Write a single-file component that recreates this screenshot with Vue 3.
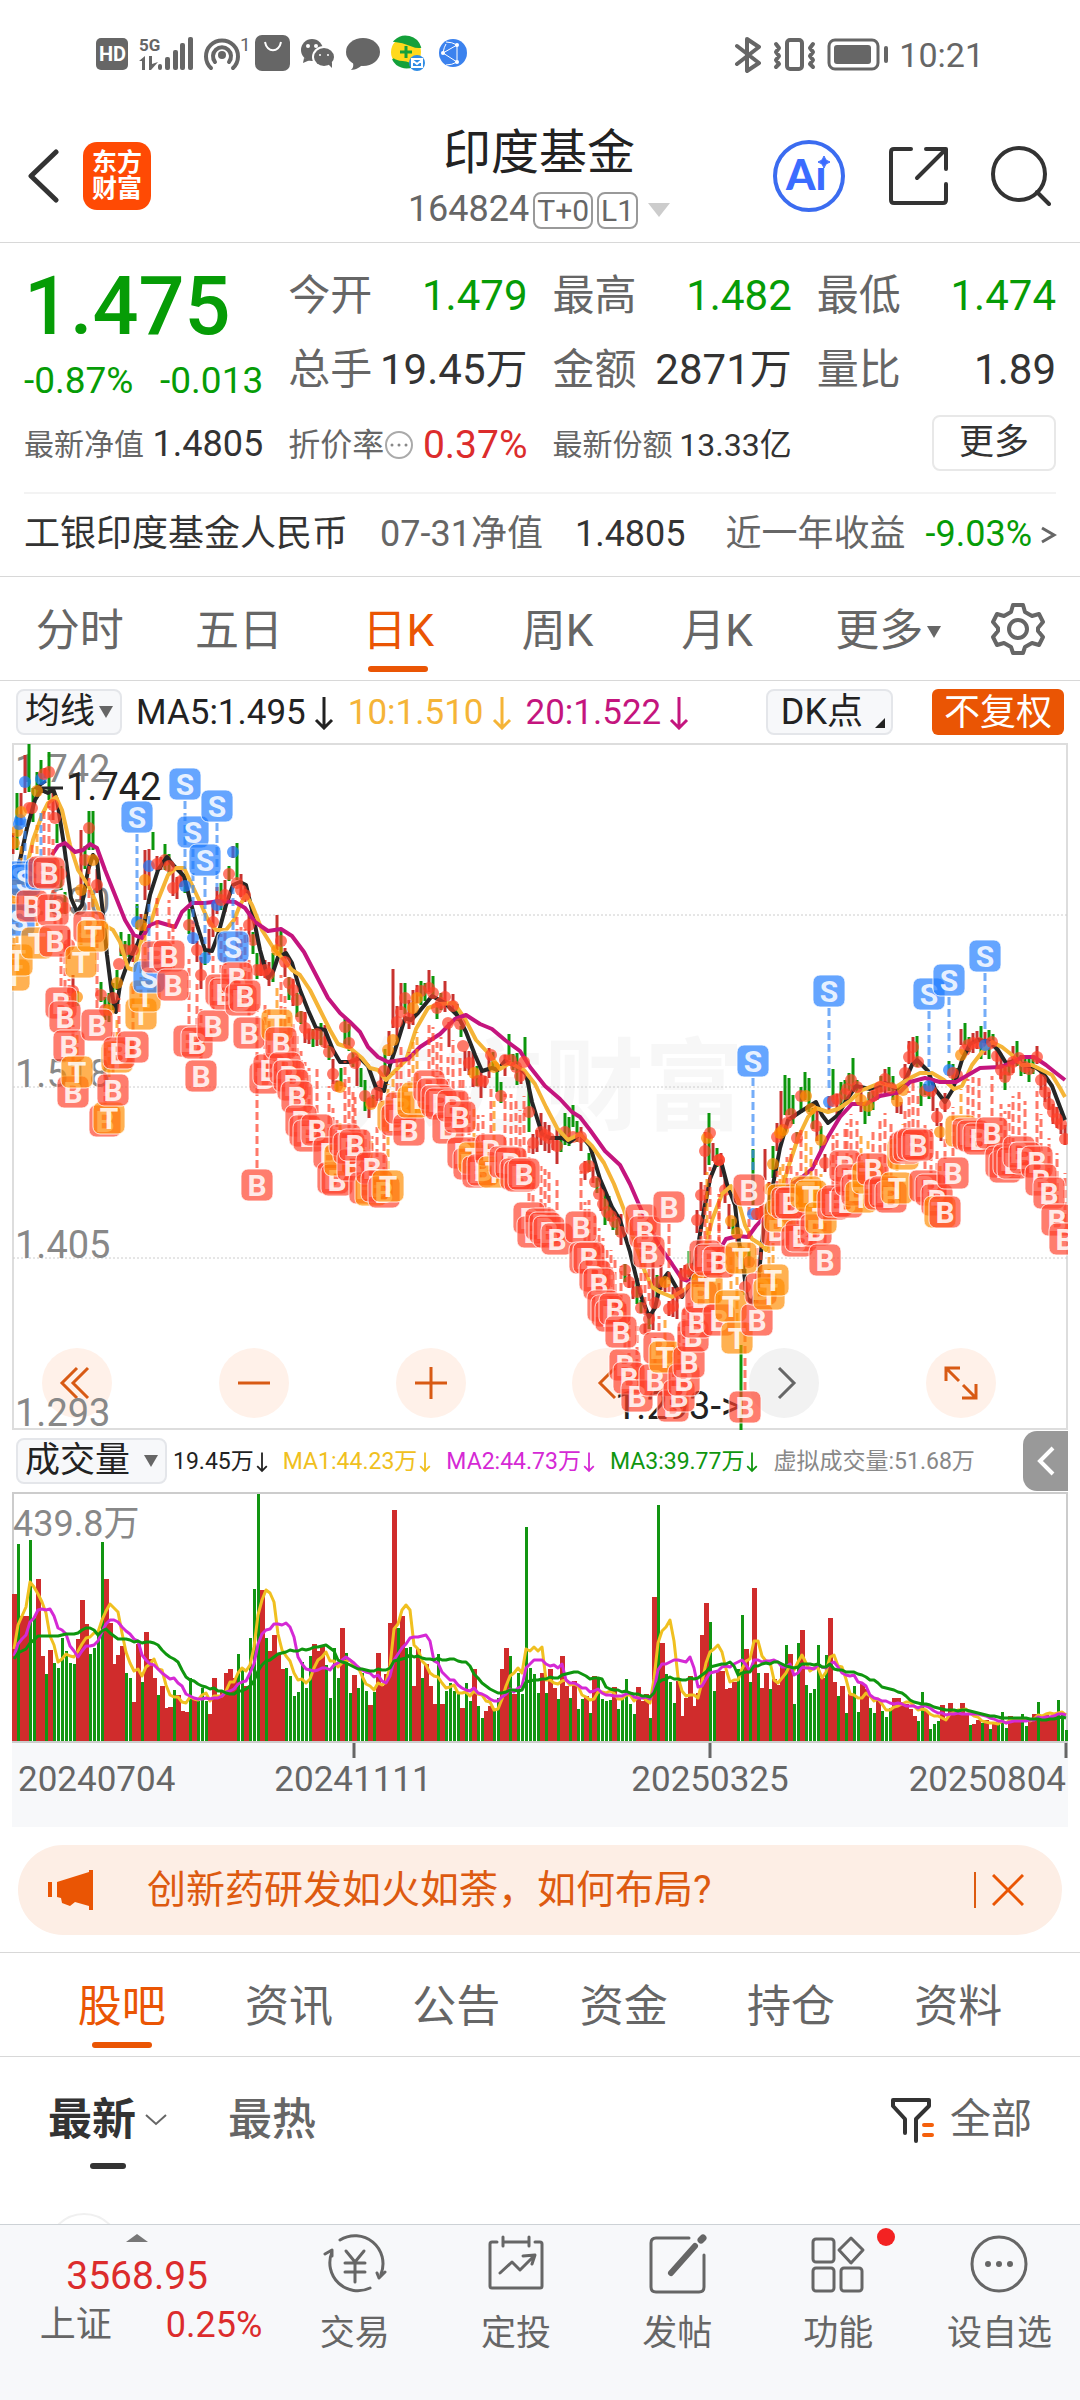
<script setup>
import { ref } from 'vue'

const periods = ['分时', '五日', '日K', '周K', '月K']
const period = ref('日K')
const sections = ['股吧', '资讯', '公告', '资金', '持仓', '资料']
const section = ref('股吧')

// Daily closes as [x, y] plot keys, interpolated for every trading day
const closeKeys = [
  [12, 850], [20, 820], [25, 782], [30, 815], [33, 805], [40, 780], [45, 773], [49, 772], [53, 805], [57, 830], [62, 885], [68, 930], [72, 990], [77, 997], [81, 890], [85, 860], [89, 828], [93, 860], [97, 885], [101, 995], [105, 1010], [109, 1010], [113, 998], [117, 983], [121, 945], [125, 950], [133, 950], [137, 922], [141, 925], [145, 880], [149, 866], [153, 870], [157, 864], [165, 860], [169, 866], [173, 888], [180, 880], [185, 886], [189, 925], [193, 938], [197, 950], [201, 975], [205, 958], [213, 922], [217, 905], [225, 895], [233, 852], [237, 883], [241, 890], [245, 895], [249, 925], [253, 940], [257, 970], [265, 970], [270, 975], [277, 950], [281, 941], [285, 962], [289, 983], [293, 990], [297, 1000], [303, 1025], [313, 1040], [320, 1030], [329, 1052], [335, 1085], [340, 1087], [345, 1027], [352, 1055], [358, 1070], [365, 1096], [370, 1106], [381, 1086], [389, 1045], [393, 1040], [397, 1022], [401, 1012], [405, 998], [409, 1018], [420, 991], [429, 988], [433, 993], [437, 1008], [445, 997], [449, 1032], [453, 1006], [460, 1024], [465, 1060], [471, 1065], [477, 1081], [485, 1081], [491, 1055], [497, 1078], [501, 1096], [505, 1060], [513, 1060], [521, 1078], [525, 1057], [529, 1112], [533, 1143], [541, 1132], [549, 1138], [557, 1146], [565, 1132], [573, 1137], [581, 1137], [585, 1168], [589, 1166], [597, 1187], [601, 1200], [607, 1212], [613, 1218], [621, 1232], [625, 1270], [629, 1282], [637, 1292], [641, 1308], [645, 1329], [655, 1303], [661, 1272], [665, 1282], [669, 1309], [677, 1303], [681, 1282], [687, 1267], [693, 1272], [697, 1220], [701, 1195], [705, 1151], [709, 1125], [713, 1155], [721, 1162], [727, 1204], [733, 1230], [739, 1235], [745, 1287], [749, 1262], [753, 1214], [760, 1214], [765, 1210], [770, 1184], [777, 1137], [785, 1127], [793, 1110], [797, 1138], [801, 1096], [809, 1096], [813, 1122], [817, 1127], [821, 1140], [825, 1163], [829, 1102], [837, 1099], [845, 1094], [853, 1075], [865, 1112], [873, 1096], [881, 1086], [887, 1075], [893, 1094], [901, 1107], [905, 1073], [909, 1057], [913, 1047], [917, 1050], [921, 1096], [929, 1086], [933, 1096], [941, 1137], [949, 1070], [957, 1075], [961, 1055], [969, 1044], [977, 1042], [985, 1045], [993, 1042], [1001, 1070], [1005, 1077], [1017, 1055], [1025, 1067], [1033, 1070], [1037, 1057], [1041, 1080], [1049, 1104], [1057, 1119], [1063, 1126], [1067, 1151]
]
const closeAt = (x) => {
  for (let i = 1; i < closeKeys.length; i++) {
    if (x <= closeKeys[i][0]) {
      const [x0, y0] = closeKeys[i - 1]
      const [x1, y1] = closeKeys[i]
      return Math.round(y0 + ((y1 - y0) * (x - x0)) / (x1 - x0))
    }
  }
  return closeKeys[closeKeys.length - 1][1]
}

// Days whose full range is much wider than the usual one: x -> [high, low, rising]
const wide = {
  17: [793, 850, 0], 25: [755, 793, 1], 29: [744, 792, 0], 49: [752, 800, 0], 81: [830, 900, 1], 89: [811, 850, 0], 93: [811, 850, 0],
  145: [850, 900, 1], 149: [849, 890, 1], 153: [832, 850, 0], 237: [843, 880, 0], 277: [915, 950, 1], 345: [1019, 1045, 0],
  393: [969, 1028, 1], 401: [983, 1010, 1], 421: [981, 1005, 0], 509: [1034, 1060, 0], 525: [1037, 1060, 0], 529: [1075, 1132, 0],
  573: [1105, 1127, 0], 653: [1262, 1330, 1], 705: [1132, 1175, 1], 709: [1113, 1165, 0], 741: [1345, 1430, 0], 753: [1149, 1205, 0],
  765: [1149, 1180, 1], 781: [1091, 1140, 1], 785: [1075, 1115, 0], 789: [1078, 1115, 0], 805: [1072, 1100, 0], 833: [1069, 1100, 0],
  965: [1023, 1045, 0], 961: [1029, 1045, 1]
}
let seed = 7
const rand = () => {
  seed = (seed * 1103515245 + 12345) % 2147483648
  return seed / 2147483648
}
const candles = Array.from({ length: 264 }, (_, i) => {
  const x = 13 + i * 4
  if (wide[x]) return { x, top: wide[x][0], bottom: wide[x][1], up: wide[x][2] }
  const y = closeAt(x)
  const a = Math.round(rand() * 14)
  const b = Math.round(rand() * 14)
  const up = rand() > 0.5
  return { x, top: y - 5 - a, bottom: y + 4 + b, up }
})

const ma5 = '14,880 20,860 27,828 35,800 41,790 48,793 53,789 57,800 64,845 71,898 77,912 82,905 88,870 93,855 97,860 102,905 107,955 112,995 116,1012 120,985 128,962 138,943 144,925 150,895 158,870 167,857 174,866 184,876 190,900 197,925 205,950 212,951 218,935 226,905 233,885 240,882 246,885 252,910 260,950 268,978 273,972 278,957 286,953 292,963 300,990 308,1010 316,1028 325,1030 333,1050 340,1062 350,1062 360,1058 368,1066 376,1088 384,1091 390,1065 397,1044 405,1018 411,1020 418,1013 432,996 445,1003 458,1016 466,1032 475,1055 482,1071 492,1068 498,1070 505,1061 520,1068 526,1074 532,1102 542,1134 550,1138 562,1138 570,1142 580,1134 590,1146 600,1179 612,1207 620,1220 630,1252 640,1293 649,1317 655,1308 661,1282 668,1273 676,1287 682,1297 690,1284 698,1246 704,1210 710,1179 716,1164 721,1161 727,1184 735,1205 739,1241 744,1272 747,1298 752,1303 758,1287 761,1252 765,1215 772,1190 780,1148 788,1120 800,1112 816,1102 822,1115 828,1123 838,1115 846,1101 856,1086 870,1089 885,1083 897,1089 905,1081 912,1065 917,1060 928,1071 935,1089 945,1102 953,1089 962,1060 970,1044 978,1040 990,1042 998,1050 1006,1063 1015,1061 1025,1065 1035,1067 1043,1073 1052,1086 1060,1107 1065,1120'
const ma10 = '26,870 33,840 42,815 48,803 56,797 62,810 70,845 78,870 88,885 95,900 104,925 113,930 120,942 128,968 134,970 142,938 150,925 158,900 168,875 176,868 184,868 192,885 200,902 208,920 216,930 226,930 234,920 240,905 246,895 252,905 262,930 274,949 284,960 292,970 300,975 310,990 320,1010 330,1030 338,1044 350,1048 362,1058 370,1068 378,1070 386,1080 396,1070 406,1060 416,1029 428,1008 440,1004 454,1003 465,1019 476,1040 490,1055 500,1069 510,1063 524,1070 535,1084 546,1107 557,1128 568,1140 580,1134 592,1146 604,1163 614,1184 624,1210 636,1246 645,1272 652,1287 660,1292 672,1297 684,1290 692,1284 702,1262 712,1220 722,1194 731,1186 738,1200 745,1225 752,1239 760,1244 766,1250 776,1210 788,1168 798,1138 808,1117 816,1108 828,1112 838,1109 850,1101 860,1091 880,1083 896,1087 910,1078 920,1073 932,1073 944,1080 954,1089 962,1086 972,1065 982,1052 992,1042 1002,1047 1012,1055 1022,1065 1032,1065 1042,1070 1052,1075 1060,1088 1065,1097'
const ma20 = '52,855 58,846 65,843 75,852 83,850 90,844 97,848 105,870 115,895 125,920 134,935 142,938 150,925 158,922 175,927 182,912 192,903 205,903 220,901 235,902 245,908 255,922 268,931 281,929 292,936 304,952 316,975 328,998 340,1013 350,1022 360,1032 368,1047 378,1057 388,1062 408,1059 420,1047 440,1034 455,1019 466,1015 480,1024 492,1029 505,1040 520,1051 530,1067 545,1086 560,1099 572,1112 580,1117 590,1130 605,1151 620,1165 630,1184 640,1207 650,1229 660,1247 672,1264 682,1279 692,1282 704,1282 716,1256 726,1239 738,1236 748,1237 756,1226 768,1213 785,1189 800,1179 812,1169 820,1153 828,1137 840,1117 852,1104 866,1104 880,1096 900,1092 910,1082 925,1078 940,1082 956,1082 968,1075 980,1068 1000,1067 1012,1063 1022,1057 1034,1057 1046,1065 1056,1073 1065,1080'

// Trade signals: type, x, y of the badge
const signals = [
  ['T', 14, 975], ['T', 17, 960], ['S', 20, 877], ['T', 21, 895], ['S', 19, 920], ['S', 25, 880], ['B', 32, 906], ['T', 37, 943], ['S', 41, 874], ['B', 44, 872], ['B', 49, 873], ['B', 53, 910], ['B', 55, 941],
  ['B', 61, 1003], ['B', 65, 1017], ['B', 69, 1046], ['B', 73, 1092], ['T', 77, 1072], ['T', 81, 962], ['B', 89, 927], ['T', 93, 936], ['B', 97, 1025], ['B', 105, 1121], ['T', 109, 1118], ['T', 117, 1057], ['B', 113, 1090], ['B', 119, 1053], ['B', 133, 1047],
  ['S', 137, 817], ['T', 141, 1014], ['T', 145, 996], ['S', 149, 977], ['B', 157, 957], ['B', 169, 956], ['B', 173, 985], ['S', 185, 784], ['S', 193, 832], ['S', 205, 860], ['S', 217, 806], ['B', 189, 1041], ['B', 197, 1043], ['B', 201, 1076],
  ['B', 213, 1026], ['B', 221, 990], ['B', 225, 994], ['S', 233, 947], ['B', 237, 978], ['B', 241, 1000], ['B', 245, 996], ['B', 249, 1033], ['B', 257, 1185], ['B', 265, 1078], ['B', 269, 1070], ['T', 277, 1025], ['B', 281, 1043],
  ['B', 285, 1068], ['B', 289, 1076], ['B', 293, 1085], ['B', 297, 1097], ['B', 301, 1121], ['B', 305, 1131], ['B', 309, 1136], ['B', 317, 1130], ['B', 329, 1153], ['B', 333, 1178], ['B', 337, 1180], ['T', 340, 1160],
  ['B', 345, 1140], ['B', 349, 1148], ['B', 353, 1165], ['B', 355, 1145], ['B', 365, 1188], ['T', 371, 1190], ['B', 372, 1168], ['B', 377, 1186], ['B', 384, 1192], ['T', 388, 1186], ['T', 393, 1116], ['B', 397, 1120], ['B', 401, 1108],
  ['B', 409, 1130], ['T', 413, 1102], ['T', 417, 1098], ['B', 429, 1086], ['B', 433, 1094], ['B', 437, 1101], ['B', 441, 1104], ['B', 448, 1128], ['B', 453, 1106], ['B', 460, 1117], ['B', 463, 1153], ['B', 469, 1164], ['T', 474, 1158],
  ['B', 478, 1172], ['B', 483, 1170], ['B', 491, 1150], ['T', 494, 1172], ['B', 505, 1162], ['B', 511, 1163], ['B', 516, 1174], ['B', 520, 1176], ['B', 524, 1174], ['B', 529, 1218], ['B', 533, 1232], ['B', 541, 1224], ['B', 545, 1228],
  ['B', 549, 1232], ['B', 557, 1239], ['B', 581, 1227], ['B', 585, 1258], ['B', 589, 1258], ['B', 595, 1276], ['B', 599, 1284], ['B', 603, 1306], ['B', 607, 1311], ['B', 611, 1316], ['B', 615, 1309], ['B', 621, 1332],
  ['B', 625, 1365], ['B', 629, 1378], ['B', 637, 1396], ['B', 641, 1220], ['B', 645, 1232], ['B', 649, 1252], ['B', 669, 1207], ['B', 655, 1380], ['B', 659, 1348], ['T', 665, 1357], ['B', 673, 1406], ['B', 679, 1396], ['B', 684, 1380],
  ['B', 689, 1362], ['B', 693, 1336], ['B', 697, 1322], ['B', 701, 1297], ['B', 705, 1256], ['T', 707, 1288], ['B', 710, 1260], ['B', 719, 1320], ['B', 719, 1262], ['T', 731, 1306], ['T', 737, 1338], ['T', 741, 1258], ['B', 745, 1407],
  ['B', 749, 1190], ['S', 753, 1061], ['B', 757, 1320], ['B', 761, 1289], ['T', 769, 1294], ['T', 773, 1280], ['B', 777, 1230], ['T', 780, 1216], ['T', 783, 1200], ['B', 787, 1203], ['B', 791, 1203], ['B', 797, 1241], ['B', 801, 1236],
  ['T', 806, 1192], ['T', 811, 1196], ['B', 816, 1230], ['T', 821, 1218], ['B', 825, 1260], ['S', 829, 991], ['B', 833, 1204], ['B', 837, 1201], ['B', 845, 1166], ['B', 847, 1202], ['B', 851, 1180], ['B', 857, 1190], ['T', 861, 1197], ['T', 868, 1178], ['B', 873, 1169],
  ['B', 880, 1194], ['B', 885, 1192], ['B', 891, 1197], ['T', 897, 1188], ['T', 903, 1154], ['B', 905, 1148], ['B', 909, 1146], ['B', 913, 1144], ['B', 918, 1145], ['B', 925, 1186], ['B', 931, 1190], ['S', 929, 994], ['B', 937, 1200], ['T', 940, 1212], ['B', 945, 1212],
  ['S', 949, 980], ['B', 953, 1173], ['T', 961, 1131], ['B', 968, 1134], ['B', 973, 1136], ['B', 979, 1139], ['S', 985, 956], ['B', 992, 1133], ['B', 1001, 1162], ['B', 1005, 1167], ['B', 1009, 1160], ['B', 1013, 1163], ['B', 1019, 1152],
  ['B', 1025, 1158], ['B', 1037, 1162], ['B', 1041, 1180], ['B', 1049, 1193], ['B', 1057, 1220], ['B', 1065, 1239]
].map(([type, x, y]) => {
  const price = closeAt(x)
  const below = y > price
  return { type, x, y, price, from: below ? price + 34 : price - 14, to: below ? y - 17 : y + 17 }
})
const plainDots = candles
  .filter((c, i) => i % 2 === 0 && !signals.some((s) => Math.abs(s.x - c.x) < 3))
  .map((c) => ({ x: c.x, y: closeAt(c.x) }))

// Daily volume; negative marks a falling day
const volumes = [
  440, -590, 375, 375, -603, -370, 485, 255, -200, 272, -235, -220, -310, -270, -235, -230, 305, 422, 350, -260, -280, -330, -598, 487, 355, 230, 258, 285, -203, -190, 118, 290, -178, 327, 245, 190, -138, 165, 98, 103, -153, 138, 90, 88,
  -190, 128, -120, -158, -120, 80, 190, 130, 150, 203, 216, 190, -262, -218, 165, -308, -457, -740, 452, -308, 270, 318, 260, 215, -218, -195, -135, -148, -238, -160, -255, 290, 270, 285, -228, -130, -280, -190, 340, -265, -145, 197, -158, -205,
  -150, 108, -148, 263, 165, 200, 353, 692, -340, 375, -280, -283, 165, 275, -190, 230, 165, 110, -260, 110, -150, -175, -150, -140, 98, -173, -120, 215, -105, -70, 90, 105, -90, -130, 215, 280, -255, 140, -205, -140, -643, -220, -200, -145,
  205, -145, 215, 160, -125, 255, 165, -130, 180, -95, -125, 135, -85, 195, -190, -125, -120, -122, 163, -95, -130, -185, -110, -80, 162, 120, 140, -70, 432, -708, 293, -200, -178, -115, 180, 75, 130, 195, 105, 145, 317, 413, -357, -150,
  210, 210, 155, 160, 178, -215, -378, 276, -178, 460, -205, 160, 203, -155, 185, 168, 230, -288, 262, -110, -293, 333, -168, -145, -155, -287, 190, -258, 370, 178, -135, 165, -83, 140, -165, -88, 170, 155, -98, -85, 125, -90, -72, -100, 130,
  128, 118, 110, 95, 75, -60, -147, 90, -35, -50, -60, 107, 70, 113, 85, 90, 113, 80, -48, 50, 63, -55, 62, -35, 58, -50, -88, -40, 75, 60, 62, -82, -45, 58, 82, -118, 70, 78, 68, 78, -124, -85, -33
]
const volumeBase = 1741
const bars = volumes.map((v, i) => ({ x: 14 + i * 4, h: Math.round(Math.abs(v) / 3), up: v > 0 }))
const average = (n) =>
  volumes
    .map((_, i) => {
      let sum = 0
      for (let k = i - n + 1; k <= i; k++) sum += k < 0 ? 235 : Math.abs(volumes[k])
      return `${14 + i * 4},${volumeBase - Math.round(sum / n / 3)}`
    })
    .join(' ')
const volumeLines = [
  { color: '#f0c020', points: average(5) },
  { color: '#d529d5', points: average(10) },
  { color: '#0f960f', points: average(20) }
]
</script>

<template>
  <div class="page">
    <header class="top">
      <div class="status">
        <svg class="status-left" viewBox="0 0 376 40" aria-hidden="true">
          <g fill="#666">
            <rect x="0" y="3" width="32" height="32" rx="5" />
            <text x="3" y="26" font-size="20" font-weight="700" fill="#fff">HD</text>
            <text x="43" y="16" font-size="17" font-weight="700">5G</text>
            <path d="M43 26l6-5v14h-3v-9zM53 21h3v8l6-2-7 8h-2z" />
            <rect x="62" y="29" width="4" height="6" rx="2" /><rect x="69" y="22" width="5" height="13" rx="2" /><rect x="77" y="15" width="5" height="20" rx="2" /><rect x="84" y="8" width="5" height="27" rx="2" /><rect x="92" y="2" width="5" height="33" rx="2" />
            <circle cx="126" cy="20" r="4" />
            <g fill="none" stroke="#666" stroke-width="4" stroke-linecap="round"><path d="M115 33a16 16 0 1 1 22 0M119 27a9 9 0 1 1 14 0" /></g>
            <text x="144" y="16" font-size="19">1</text>
            <rect x="159" y="0" width="35" height="36" rx="7" />
            <path d="M169 7c2 11 14 11 16 0" fill="none" stroke="#fff" stroke-width="2" />
            <ellipse cx="216" cy="15" rx="11" ry="11" /><path d="M208 23l-1 5 7-3z" />
            <ellipse cx="228" cy="22" rx="12" ry="11" fill="#fff" /><ellipse cx="228" cy="22" rx="10" ry="9" /><path d="M232 29l4 4v-6z" />
            <g fill="#fff"><circle cx="212" cy="11" r="2" /><circle cx="220" cy="11" r="2" /><circle cx="224" cy="20" r="1" /><circle cx="232" cy="20" r="1" /></g>
            <ellipse cx="267" cy="17" rx="17" ry="14" /><path d="M257 28c1 4-1 6-2 7 5 0 9-3 11-5z" />
            <circle cx="310" cy="17" r="15" fill="#ffd91c" />
            <path d="M299 6a15 15 0 0 1 25 6c-7 1-11-5-25-6zM297 24c6 5 14 1 20 7a15 15 0 0 1-20-7z" fill="#14a03a" stroke="#14a03a" stroke-width="2" />
            <path d="M310 11v12M304 17h12" stroke="#14a03a" stroke-width="3" />
            <circle cx="321" cy="28" r="8" fill="#2f8ce4" /><path d="M316 24h10v8h-10zM316 25l5 4 5-4" fill="none" stroke="#fff" stroke-width="2" />
            <circle cx="357" cy="18" r="14" fill="#3b82ee" />
            <path d="M347 18l14-8M347 18l14 9M361 10v17M350 7q6 0 11 3M350 30q6 0 11-3M347 18q1-6 3-9" fill="none" stroke="#fff" />
            <g fill="#fff"><circle cx="347" cy="18" r="2" /><circle cx="361" cy="10" r="2" /><circle cx="361" cy="27" r="2" /></g>
          </g>
        </svg>
        <div class="status-right">
          <svg viewBox="0 0 154 36" width="154" height="36" fill="none" stroke="#666" stroke-width="4" stroke-linejoin="round" stroke-linecap="round" aria-hidden="true">
            <path d="M3 9l22 17-12 8V2l12 8L3 27" />
            <rect x="53" y="3" width="15" height="29" rx="3" />
            <path d="M42 7l3 4-3 4 3 4-3 4 3 4-3 3M79 7l-3 4 3 4-3 4 3 4-3 4 3 3" />
            <rect x="95" y="3" width="49" height="29" rx="6" stroke-width="3" />
            <rect x="100" y="8" width="37" height="19" rx="3" fill="#666" stroke="none" />
            <path d="M152 11v13" />
          </svg>
          <span>10:21</span>
        </div>
      </div>
      <div class="nav">
        <div class="nav-left">
          <button class="plain" aria-label="返回">
            <svg width="32" height="54" viewBox="0 0 32 54" fill="none" stroke="#333" stroke-width="5" stroke-linecap="round" stroke-linejoin="round"><path d="M29 3L4 27l25 24" /></svg>
          </button>
          <a class="brand" href="#">东方<br />财富</a>
        </div>
        <div class="title">
          <h1>印度基金</h1>
          <div class="code">
            <span>164824</span><span class="tag">T+0</span><span class="tag">L1</span><i class="drop"></i>
          </div>
        </div>
        <div class="nav-right">
          <button class="plain" aria-label="Ai">
            <svg width="72" height="72" viewBox="0 0 72 72">
              <circle cx="36" cy="36" r="34" fill="none" stroke="#3b6cf0" stroke-width="4" />
              <text x="13" y="50" class="ai">Ai</text>
              <circle cx="50" cy="21" r="7" fill="#fff" /><path d="M51 16q1 5 6 6-5 1-6 6-1-5-6-6 5-1 6-6z" fill="#3b6cff" stroke="#3b6cff" />
            </svg>
          </button>
          <button class="plain" aria-label="分享">
            <svg width="60" height="60" viewBox="0 0 60 60" fill="none" stroke="#333" stroke-width="4" stroke-linecap="round" stroke-linejoin="round"><path d="M23 3H6q-3 0-3 3v48q0 3 3 3h49q3 0 3-3V38M38 3h20v20M57 4L29 32" /></svg>
          </button>
          <button class="plain" aria-label="搜索">
            <svg width="60" height="60" viewBox="0 0 60 60" fill="none" stroke="#333" stroke-width="4" stroke-linecap="round"><circle cx="28" cy="28" r="26" /><path d="M46 46l12 12" /></svg>
          </button>
        </div>
      </div>
    </header>

    <section class="quote">
      <div class="grid">
        <div class="price">
          <strong>1.475</strong>
          <div class="change"><span>-0.87%</span><span>-0.013</span></div>
        </div>
        <div class="cell"><span>今开</span><b class="green">1.479</b></div>
        <div class="cell"><span>最高</span><b class="green">1.482</b></div>
        <div class="cell"><span>最低</span><b class="green">1.474</b></div>
        <div class="cell"><span>总手</span><b>19.45万</b></div>
        <div class="cell"><span>金额</span><b>2871万</b></div>
        <div class="cell"><span>量比</span><b>1.89</b></div>
        <div class="cell small"><span>最新净值</span><b class="mid">1.4805</b></div>
        <div class="cell small">
          <span class="rate">折价率<svg width="30" height="30" viewBox="0 0 30 30"><circle cx="15" cy="15" r="13" fill="none" stroke="#aaa" stroke-width="2" /><path d="M8 15h0M15 15h0M22 15h0" stroke="#888" stroke-width="3" stroke-linecap="round" /></svg></span>
          <b class="red">0.37%</b>
        </div>
        <div class="cell small"><span>最新份额</span><b class="share">13.33亿</b></div>
        <div class="cell end"><button class="more">更多</button></div>
      </div>
      <a class="fund" href="#">
        <span class="dark">工银印度基金人民币</span><span>07-31净值</span><span class="dark">1.4805</span>
        <span class="year">近一年收益</span>
        <span class="last">-9.03%<svg width="16" height="24" viewBox="0 0 16 24" fill="none" stroke="#666" stroke-width="3"><path d="M1 5l12 7-12 7" /></svg></span>
      </a>
    </section>

    <nav class="periods">
      <button v-for="p in periods" :key="p" class="tab" :class="{ on: p === period }" @click="period = p">{{ p }}</button>
      <button class="tab more-tab">更多<i class="drop dark-drop"></i></button>
      <button class="plain gear" aria-label="设置">
        <svg width="54" height="54" viewBox="0 0 54 54" fill="none" stroke="#666" stroke-width="4" stroke-linejoin="round"><path d="M22 3h10l2 7 7 4 7-2 4 8-5 6v3l5 6-4 8-7-2-7 4-2 6H22l-2-6-7-4-7 2-4-8 5-6v-3l-5-6 4-8 7 2 7-4z" /><circle cx="27" cy="27" r="9" /></svg>
      </button>
    </nav>

    <div class="averages">
      <button class="chip">均线<i class="drop dark-drop"></i></button>
      <span class="avg c1">MA5:1.495<svg class="down" viewBox="0 0 20 34"><path d="M10 1v31M2 24l8 8 8-8" /></svg></span>
      <span class="avg c2">10:1.510<svg class="down" viewBox="0 0 20 34"><path d="M10 1v31M2 24l8 8 8-8" /></svg></span>
      <span class="avg c3">20:1.522<svg class="down" viewBox="0 0 20 34"><path d="M10 1v31M2 24l8 8 8-8" /></svg></span>
      <button class="chip dk">DK点<i class="corner"></i></button>
      <button class="adjust">不复权</button>
    </div>

    <section class="chart">
      <div class="tools">
        <button aria-label="最早"><svg viewBox="0 0 36 36"><path d="M18 3L3 18l15 15M29 3L14 18l15 15" /></svg></button>
        <button aria-label="缩小"><svg viewBox="0 0 36 36"><path d="M2 18h32" /></svg></button>
        <button aria-label="放大"><svg viewBox="0 0 36 36"><path d="M2 18h32M18 2v32" /></svg></button>
        <button aria-label="向前"><svg viewBox="0 0 36 36"><path d="M26 3L11 18l15 15" /></svg></button>
        <button class="grey" aria-label="向后"><svg viewBox="0 0 36 36"><path d="M13 3l15 15-15 15" /></svg></button>
        <button aria-label="全屏"><svg viewBox="0 0 36 36"><path d="M3 16V3h14M3 3l13 13M20 20l13 13M33 19v14H19" /></svg></button>
      </div>
      <svg class="plot" viewBox="12 743 1056 687">
        <text x="344" y="1122" class="watermark">东方财富</text>
        <rect x="13" y="744" width="1054" height="685" fill="none" stroke="#ddd" stroke-width="2" />
        <path d="M13 915H1067M13 1087H1067M13 1258H1067" stroke="#ccc" stroke-dasharray="2 2" />
        <g class="scale">
          <text x="15" y="782">1.742</text><text x="15" y="915">1.630</text><text x="15" y="1087">1.518</text><text x="15" y="1258">1.405</text><text x="15" y="1426">1.293</text>
        </g>
        <line v-for="c in candles" :key="c.x" :x1="c.x" :x2="c.x" :y1="c.top" :y2="c.bottom" :stroke="c.up ? '#c8322f' : '#0c960c'" stroke-width="3" />
        <g class="scale black"><text x="66" y="800">1.742</text><text x="615" y="1419">1.293-&gt;</text></g>
        <path d="M63 788H36M46 781l-10 7 12 5" fill="none" stroke="#262626" stroke-width="3" />
        <g class="B"><circle v-for="d in plainDots" :key="d.x" :cx="d.x" :cy="d.y" r="6" class="dot" /></g>
        <g fill="none" stroke-width="4" stroke-linejoin="round">
          <polyline :points="ma5" stroke="#262626" />
          <polyline :points="ma10" stroke="#f5b437" />
          <polyline :points="ma20" stroke="#c4157e" />
        </g>
        <g v-for="(s, i) in signals" :key="'d' + i" :class="s.type">
          <circle :cx="s.x" :cy="s.price" r="6" class="dot" />
          <line v-if="Math.abs(s.to - s.from) > 6 && (s.to - s.from) * (s.y - s.price) > 0" :x1="s.x" :x2="s.x" :y1="s.to" :y2="s.from" class="stem" />
        </g>
        <g v-for="(s, i) in signals" :key="'b' + i" :class="s.type">
          <rect :x="s.x - 16" :y="s.y - 16" width="32" height="32" rx="7" class="badge" />
          <text :x="s.x" :y="s.y + 11" class="letter">{{ s.type }}</text>
        </g>
      </svg>
    </section>

    <div class="volume-head">
      <button class="chip">成交量<i class="drop dark-drop"></i></button>
      <span class="vol c1">19.45万<svg class="down" viewBox="0 0 20 34"><path d="M10 1v31M2 24l8 8 8-8" /></svg></span>
      <span class="vol v1">MA1:44.23万<svg class="down" viewBox="0 0 20 34"><path d="M10 1v31M2 24l8 8 8-8" /></svg></span>
      <span class="vol v2">MA2:44.73万<svg class="down" viewBox="0 0 20 34"><path d="M10 1v31M2 24l8 8 8-8" /></svg></span>
      <span class="vol v3">MA3:39.77万<svg class="down" viewBox="0 0 20 34"><path d="M10 1v31M2 24l8 8 8-8" /></svg></span>
      <span class="vol v4">虚拟成交量:51.68万</span>
      <button class="fold" aria-label="展开"><svg width="18" height="30" viewBox="0 0 18 30" fill="none" stroke="#fff" stroke-width="4"><path d="M16 2L3 15l13 13" /></svg></button>
    </div>

    <section class="volume">
      <svg viewBox="12 1492 1056 335">
        <rect x="12" y="1742" width="1056" height="85" fill="#f7f8fa" />
        <rect x="13" y="1493" width="1054" height="249" fill="#fff" stroke="#ccc" stroke-width="2" />
        <rect v-for="b in bars" :key="b.x" :x="b.up ? b.x - 2 : b.x - 1" :y="volumeBase - b.h" :width="b.up ? 5 : 3" :height="b.h" :fill="b.up ? '#d02c2c' : '#129512'" />
        <polyline v-for="l in volumeLines" :key="l.color" :points="l.points" fill="none" :stroke="l.color" stroke-width="3" stroke-linejoin="round" />
        <text x="13" y="1536" class="max">439.8万</text>
        <path d="M354 1743v15M710 1743v15M1066 1743v15" stroke="#666" stroke-width="3" />
        <g class="dates">
          <text x="18" y="1791">20240704</text>
          <text x="353" y="1791" text-anchor="middle">20241111</text>
          <text x="710" y="1791" text-anchor="middle">20250325</text>
          <text x="1066" y="1791" text-anchor="end">20250804</text>
        </g>
      </svg>
    </section>

    <aside class="banner">
      <svg width="46" height="40" viewBox="0 0 46 40" fill="#ea5504"><path d="M0 12h4v15H0zM9 12L41 2V0h4v40h-4v-4l-14-4-5 4-8-3-1-5-4-1z" /></svg>
      <a href="#">创新药研发如火如荼，如何布局?</a>
      <button class="plain" aria-label="关闭"><svg width="32" height="32" viewBox="0 0 32 32" stroke="#ea5504" stroke-width="3"><path d="M1 1l30 30M31 1L1 31" /></svg></button>
    </aside>

    <nav class="sections">
      <button v-for="s in sections" :key="s" class="tab" :class="{ on: s === section }" @click="section = s">{{ s }}</button>
    </nav>

    <main class="feed">
      <div class="sort">
        <button class="plain newest">最新<svg width="22" height="14" viewBox="0 0 22 14" fill="none" stroke="#666" stroke-width="2"><path d="M1 2l10 9 10-9" /></svg></button>
        <button class="plain hottest">最热</button>
        <button class="plain filter">
          <svg width="44" height="46" viewBox="0 0 44 46" fill="none" stroke="#333" stroke-width="4" stroke-linecap="round" stroke-linejoin="round"><path d="M15 36V22L3 9V3h36v6L26 22v22" /><path d="M34 28h8M34 38h8" stroke="#f4600c" /></svg>
          全部
        </button>
      </div>
      <div class="post"><div class="avatar"></div></div>
    </main>

    <footer class="bar">
      <button class="index">
        <i class="up"></i>
        <span class="value">3568.95</span>
        <span class="pair"><span>上证</span><span class="red">0.25%</span></span>
      </button>
      <button class="item">
        <svg viewBox="0 0 64 60"><path d="M17 6a28 28 0 0 1 41 34M2 20l7-4v6M47 54A28 28 0 0 1 9 18M62 38l-6 6-2-5" /><path d="M23 17l9 11 9-11M22 29h20M22 38h20M32 28v20" /></svg>交易
      </button>
      <button class="item">
        <svg viewBox="0 0 64 60"><path d="M13 8H8q-2 0-2 2v42q0 2 2 2h48q2 0 2-2V10q0-2-2-2h-5M20 8h24M19 3v9M45 3v9M16 39l12-11 8 8 14-14M39 22l12-1-3 9" /></svg>定投
      </button>
      <button class="item">
        <svg viewBox="0 0 64 60"><path d="M44 4H11q-5 0-5 5v44q0 5 5 5h43q5 0 5-5V21" /><path d="M26 39l24-27" stroke-width="6" /><path d="M56 6l2-2" stroke-width="7" /></svg>发帖
      </button>
      <button class="item">
        <svg viewBox="0 0 64 60"><rect x="7" y="5" width="21" height="23" rx="3" /><rect x="7" y="34" width="21" height="23" rx="3" /><rect x="35" y="34" width="21" height="23" rx="3" /><path d="M45 4l12 12-12 13-12-13z" /></svg>功能<i class="badge-dot"></i>
      </button>
      <button class="item">
        <svg viewBox="0 0 64 60"><circle cx="32" cy="30" r="27" /><path d="M21 30h0M32 30h0M43 30h0" stroke-width="6" /></svg>设自选
      </button>
    </footer>
  </div>
</template>

<style>
body { margin: 0; background: #fff; }
</style>

<style scoped>
.page { min-height: 100vh; display: flex; flex-direction: column; background: #fff; color: #333; font-family: Roboto, "Noto Sans CJK SC", sans-serif; font-size: 36px; line-height: 1.2; overflow-x: hidden; }
button { font: inherit; color: inherit; border: 0; background: none; padding: 0; margin: 0; }
a { color: inherit; text-decoration: none; }
svg { display: block; flex: none; }
.green { color: #069c06; }
.red { color: #dc2c2c; }
.plain { display: flex; align-items: center; }

.top { border-bottom: 1px solid #d8d8d8; }
.status { display: flex; justify-content: space-between; align-items: center; height: 38px; padding: 36px 96px 0 96px; }
.status-left { width: 376px; height: 40px; }
.status-right { display: flex; align-items: center; gap: 11px; color: #666; font-size: 34px; line-height: 38px; }
.nav { display: grid; grid-template-columns: 1fr auto 1fr; align-items: center; padding: 50px 29px 10px 27px; }
.nav-left, .nav-right { display: flex; align-items: center; margin-bottom: 4px; }
.nav-left { gap: 24px; }
.nav-right { justify-content: flex-end; gap: 43px; }
.brand { width: 68px; height: 68px; box-sizing: border-box; padding-top: 8px; border-radius: 14px; background: #ff4a04; color: #fff; font-size: 25px; font-weight: 700; line-height: 26px; text-align: center; }
.title { text-align: center; }
h1 { margin: 0 0 6px; font-size: 48px; font-weight: 400; line-height: 58px; color: #222; }
.code { display: flex; align-items: center; justify-content: center; gap: 4px; height: 44px; color: #666; font-size: 36px; }
.tag { border: 2px solid #999; border-radius: 8px; padding: 0 2px; font-size: 30px; line-height: 33px; }
.drop { display: block; flex: none; border: 11px solid transparent; border-top: 14px solid #ccc; border-bottom: 0; margin-left: 6px; }
.dark-drop { border-width: 12px 7px 0; border-top-color: #666; margin-left: 4px; }
.ai { font-family: Lato, sans-serif; font-weight: 900; font-size: 42px; fill: #3b6cff; }

.quote { padding: 15px 24px 2px; border-bottom: 1px solid #d8d8d8; }
.grid { display: grid; grid-template-columns: repeat(4, 1fr); grid-template-rows: 72px 76px 74px; column-gap: 25px; }
.price { grid-row: span 2; color: #069c06; }
.price strong { display: block; font-size: 81px; font-weight: 500; line-height: 98px; }
.change { display: flex; justify-content: space-between; font-size: 37px; line-height: 50px; }
.cell { display: flex; align-items: center; justify-content: space-between; padding-top: 4px; font-size: 42px; color: #666; white-space: nowrap; }
.cell b { font-weight: 400; color: #333; }
.cell b.green { color: #069c06; }
.cell.small { font-size: 30px; }
.cell b.mid { font-size: 36px; }
.cell b.share { font-size: 32px; }
.cell b.red { color: #dc2c2c; font-size: 39px; }
.rate { display: flex; align-items: center; font-size: 32px; }
.cell.end { justify-content: flex-end; padding-top: 0; }
.more { width: 124px; height: 56px; border: 2px solid #e8e8e8; border-radius: 8px; font-size: 35px; line-height: 52px; color: #333; }
.fund { display: flex; align-items: center; height: 78px; margin-top: 12px; padding-top: 2px; border-top: 2px solid #f3f3f3; gap: 32px; color: #666; white-space: nowrap; }
.fund .dark { color: #333; }
.fund .year { margin-left: 8px; }
.fund .last { display: flex; align-items: center; gap: 9px; margin-left: auto; color: #069c06; }
.fund .year + .last { margin-left: -12px; flex: 1; justify-content: flex-end; }

.tab { position: relative; display: flex; align-items: center; justify-content: center; height: 103px; box-sizing: border-box; padding-top: 6px; font-size: 44px; color: #666; }
.tab.on { color: #ea5504; }
.tab.on::after { content: ""; position: absolute; left: calc(50% - 30px); bottom: 8px; width: 60px; height: 6px; border-radius: 3px; background: #ea5504; }
.periods { display: flex; align-items: center; border-bottom: 1px solid #d8d8d8; }
.periods .tab { flex: 159; }
.periods .more-tab { flex: 183; }
.gear { flex: none; justify-content: center; width: 76px; margin-right: 24px; }

.averages { display: flex; align-items: center; height: 62px; padding: 0 16px; gap: 14px; white-space: nowrap; }
.chip { display: flex; align-items: center; justify-content: center; height: 46px; box-sizing: border-box; border: 2px solid #e4e6ea; border-radius: 8px; background: #f7f8fa; padding: 0 7px; font-size: 35px; line-height: 44px; color: #222; }
.avg { display: flex; align-items: center; padding-top: 2px; font-size: 35px; }
.down { width: 20px; height: 34px; margin-left: 8px; fill: none; stroke: currentColor; stroke-width: 3; }
.c1 { color: #222; } .c2 { color: #f5b437; } .c3 { color: #c4157e; }
.dk { margin-left: auto; padding: 0 6px 0 13px; font-size: 36px; }
.corner { align-self: flex-end; margin: 0 0 5px 12px; border: 5px solid #222; border-top-color: transparent; border-left-color: transparent; }
.adjust { height: 46px; margin-left: 25px; padding: 0 12px; border-radius: 6px; background: #ea5504; color: #fff; font-size: 36px; line-height: 48px; }

.chart { position: relative; margin: 0 12px; }
.plot { position: relative; width: 100%; pointer-events: none; }
.tools { position: absolute; left: 30px; right: 72px; bottom: 12px; display: flex; justify-content: space-between; }
.tools button { width: 70px; height: 70px; border-radius: 50%; background: #fff1e9; display: flex; align-items: center; justify-content: center; color: #d85a14; }
.tools .grey { background: #f2f2f2; color: #666; }
.tools svg { width: 36px; height: 36px; fill: none; stroke: currentColor; stroke-width: 3; }
.watermark { font-size: 100px; font-weight: 700; fill: #000; fill-opacity: 0.03; }
.scale text { font-size: 38px; fill: #888; }
.scale.black text { fill: #222; }
.dot { fill-opacity: 0.7; }
.stem { stroke-width: 3; stroke-dasharray: 8 4; stroke-opacity: 0.7; }
.badge { fill-opacity: 0.68; stroke: #fff; stroke-opacity: 0.8; }
.letter { font-size: 30px; font-weight: 700; fill: #fff; fill-opacity: 0.85; text-anchor: middle; }
.B .dot, .B .badge { fill: #ff4029; } .B .stem { stroke: #ff4029; }
.T .dot, .T .badge { fill: #ff8c00; } .T .stem { stroke: #ff8c00; }
.S .dot, .S .badge { fill: #1c7aff; } .S .stem { stroke: #3b8af5; }

.volume-head { display: flex; align-items: center; height: 62px; padding: 0 12px 0 16px; gap: 6px; white-space: nowrap; }
.volume-head .dark-drop { margin-left: 14px; }
.vol { display: flex; align-items: center; margin-right: 9px; padding-top: 2px; font-size: 23px; }
.vol .down { width: 12px; height: 34px; margin-left: 2px; }
.v1 { color: #f0c020; } .v2 { color: #d529d5; } .v3 { color: #0f960f; } .v4 { color: #888; }
.fold { display: flex; align-items: center; justify-content: center; width: 45px; height: 60px; margin-left: auto; border-radius: 14px 0 0 14px; background: #999; }
.volume { margin: 0 12px; }
.volume svg { width: 100%; }
.max { font-size: 36px; fill: #888; }
.dates { font-size: 35px; fill: #666; }

.banner { display: flex; align-items: center; height: 90px; margin: 18px 18px 17px; padding: 0 38px 0 30px; border-radius: 45px; background: #fdeee5; color: #dd5a10; font-size: 39px; }
.banner a { flex: 1; margin-left: 53px; }
.banner button { height: 36px; padding-left: 16px; border-left: 2px solid #dd5a10; }
.sections { display: flex; padding: 0 38px; border-top: 1px solid #d8d8d8; border-bottom: 1px solid #d8d8d8; }
.sections .tab { flex: 1; }

.feed { flex: 1; display: flex; flex-direction: column; }
.sort { flex: none; display: flex; align-items: center; height: 126px; padding: 0 48px; font-size: 44px; color: #666; }
.newest { position: relative; height: 126px; gap: 9px; font-weight: 700; color: #333; }
.newest::after { content: ""; position: absolute; left: 42px; bottom: 14px; width: 36px; height: 6px; border-radius: 3px; background: #333; }
.hottest { margin-left: 61px; font-weight: 500; }
.filter { margin-left: auto; gap: 16px; font-size: 41px; }
.post { height: 11px; margin-top: 30px; overflow: hidden; }
.avatar { width: 74px; height: 74px; box-sizing: border-box; margin-left: 47px; border: 2px solid #f0f0f0; border-radius: 50%; }

.bar { display: flex; height: 175px; border-top: 1px solid #cdd2d6; background: #f7f8fa; color: #666; }
.index { flex: 274; display: flex; flex-direction: column; align-items: center; padding-top: 9px; }
.up { border: 11px solid transparent; border-bottom: 8px solid #777; border-top: 0; }
.value { margin-top: 10px; font-size: 39px; line-height: 48px; color: #dc2c2c; }
.pair { display: flex; gap: 54px; padding-left: 28px; line-height: 50px; }
.item { position: relative; flex: 161; display: flex; flex-direction: column; align-items: center; padding-top: 9px; line-height: 52px; gap: 14px; font-size: 35px; }
.item svg { width: 64px; height: 60px; fill: none; stroke: #666; stroke-width: 3; stroke-linecap: round; stroke-linejoin: round; }
.badge-dot { position: absolute; right: 24px; top: 3px; width: 18px; height: 18px; border-radius: 50%; background: #f32222; }
</style>
